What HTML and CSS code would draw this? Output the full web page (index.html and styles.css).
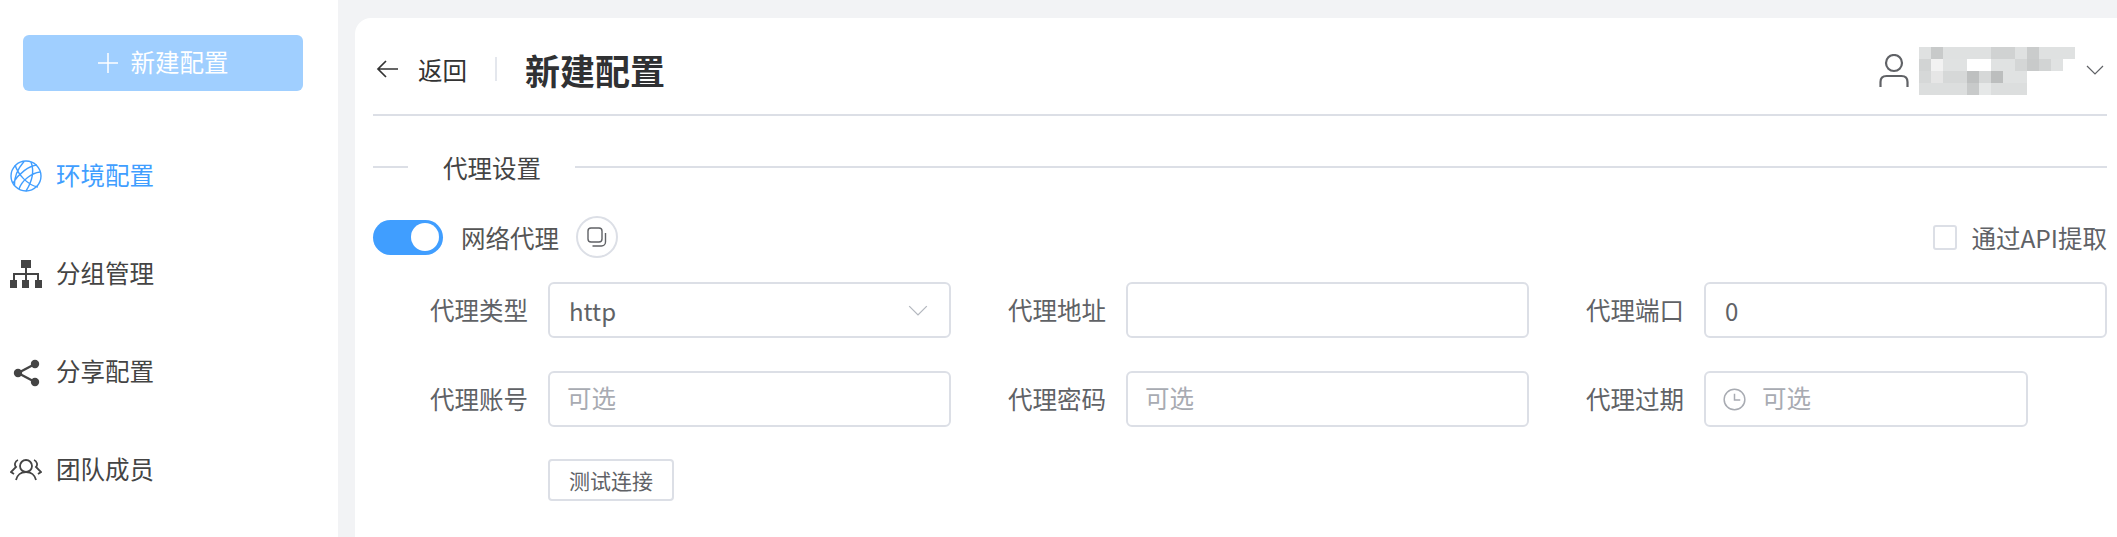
FILE: index.html
```html
<!DOCTYPE html>
<html lang="zh-CN">
  <head>
    <meta charset="UTF-8" />
    <meta name="viewport" content="width=device-width, initial-scale=1.0" />
    <title>新建配置</title>
    <link rel="stylesheet" href="styles.css">
  </head>
  <body>
    <aside class="sidebar">
      <button class="new-btn">
        <svg class="plus-icon" viewBox="0 0 20 20"><path d="M10 0v20M0 10h20" /></svg>
        <span>新建配置</span>
      </button>
      <nav class="nav">
        <a class="nav-item active">
          <svg class="nav-icon" viewBox="0 0 32 32" fill="none" stroke="currentColor" stroke-width="1.4">
            <circle cx="16" cy="16" r="15" />
            <path d="M5 5c3 9 12 20 23 22M14 1.5c-6 7-10 15-9.5 24M27 5C19 6 9 13 3 23M30 12c-8 1-18 8-21 17M21 2c3 8 2 18-5 29" />
          </svg>
          <span>环境配置</span>
        </a>
        <a class="nav-item">
          <svg class="nav-icon" viewBox="0 0 32 28" fill="currentColor">
            <rect x="11" y="0" width="10" height="8" />
            <rect x="15" y="8" width="2" height="6" />
            <rect x="3" y="13" width="26" height="2" />
            <rect x="3" y="15" width="2" height="5" />
            <rect x="15" y="15" width="2" height="5" />
            <rect x="27" y="15" width="2" height="5" />
            <rect x="0" y="20" width="7" height="8" />
            <rect x="12" y="20" width="7" height="8" />
            <rect x="25" y="20" width="7" height="8" />
          </svg>
          <span>分组管理</span>
        </a>
        <a class="nav-item">
          <svg class="nav-icon share-icon" viewBox="0 0 32 32" fill="currentColor">
            <circle cx="8" cy="16" r="4.2" />
            <circle cx="25" cy="7" r="4.2" />
            <circle cx="25" cy="25" r="4.2" />
            <path d="M8 16 25 7M8 16l17 9" stroke="currentColor" stroke-width="2.4" />
          </svg>
          <span>分享配置</span>
        </a>
        <a class="nav-item">
          <svg class="nav-icon" viewBox="0 0 32 24" fill="none" stroke="currentColor" stroke-width="1.8">
            <circle cx="16" cy="8" r="6" />
            <path d="M6 22c1-5 5-8 10-8s9 3 10 8M8 2C5 3 4 7 6 9l-5 5 3 2M24 2c3 1 4 5 2 7l5 5-3 2" />
          </svg>
          <span>团队成员</span>
        </a>
      </nav>
    </aside>

    <main class="main">
      <div class="panel">
        <header class="page-header">
          <a class="back">
            <svg class="back-icon" viewBox="0 0 22 18" fill="none" stroke="currentColor" stroke-width="1.7"><path d="M10 1 2 9l8 8M2 9h20" /></svg>
            返回
          </a>
          <span class="header-sep"></span>
          <h1 class="page-title">新建配置</h1>
          <div class="user">
            <svg class="user-icon" viewBox="0 0 30 34" fill="none" stroke="currentColor" stroke-width="2.2">
              <circle cx="15" cy="9" r="8" />
              <path d="M1.5 33v-5c0-4 2-6 6-6h15c4 0 6 2 6 6v5" />
            </svg>
            <svg class="user-blur" viewBox="0 0 13 4" shape-rendering="crispEdges">
              <rect width="13" height="1" fill="#dfe1e1" />
              <rect x="1" width="1" height="1" fill="#c8caca" />
              <rect x="6" width="2" height="1" fill="#d0d2d2" />
              <rect x="9" width="1" height="1" fill="#cacccc" />
              <rect y="1" width="13" height="1" fill="#e0e2e2" />
              <rect y="1" width="1" height="1" fill="#d2d4d4" />
              <rect x="1" y="1" width="1" height="1" fill="#f2f2f2" />
              <rect x="4" y="1" width="2" height="1" fill="#ffffff" />
              <rect x="8" y="1" width="1" height="1" fill="#d4d6d6" />
              <rect x="9" y="1" width="1" height="1" fill="#c8caca" />
              <rect x="10" y="1" width="1" height="1" fill="#d2d4d4" />
              <rect x="12" y="1" width="1" height="1" fill="#ffffff" />
              <rect y="2" width="9" height="1" fill="#d6d8d8" />
              <rect x="1" y="2" width="1" height="1" fill="#e6e6e6" />
              <rect x="4" y="2" width="1" height="1" fill="#bec0c0" />
              <rect x="6" y="2" width="1" height="1" fill="#bcbebe" />
              <rect x="7" y="2" width="2" height="1" fill="#e0e2e2" />
              <rect y="3" width="9" height="1" fill="#dcdede" />
              <rect x="4" y="3" width="1" height="1" fill="#c8caca" />
              <rect x="5" y="3" width="1" height="1" fill="#e6e8e8" />
            </svg>
            <svg class="chevron user-chevron" viewBox="0 0 18 10"><path d="M1 1l8 8 8-8" /></svg>
          </div>
        </header>

        <div class="section-title"><span>代理设置</span></div>

        <div class="switch-row">
          <span class="switch"><i class="switch-knob"></i></span>
          <span class="switch-label">网络代理</span>
          <span class="copy-btn">
            <svg class="copy-icon" viewBox="0 0 20 20" fill="none" stroke="currentColor" stroke-width="1.4">
              <rect x="1" y="1" width="14" height="14" rx="3" />
              <path d="M18.5 6v9a4 4 0 0 1-4 4h-9" />
            </svg>
          </span>
          <label class="api-check"><span class="checkbox"></span>通过API提取</label>
        </div>

        <div class="form-grid">
          <div class="form-item">
            <label>代理类型</label>
            <div class="input select">
              <span>http</span>
              <svg class="chevron select-chevron" viewBox="0 0 18 10"><path d="M1 1l8 8 8-8" /></svg>
            </div>
          </div>
          <div class="form-item">
            <label>代理地址</label>
            <div class="input"></div>
          </div>
          <div class="form-item">
            <label>代理端口</label>
            <div class="input"><span>0</span></div>
          </div>
          <div class="form-item">
            <label>代理账号</label>
            <div class="input placeholder"><span>可选</span></div>
          </div>
          <div class="form-item">
            <label>代理密码</label>
            <div class="input placeholder"><span>可选</span></div>
          </div>
          <div class="form-item">
            <label>代理过期</label>
            <div class="input placeholder date">
              <svg class="clock-icon" viewBox="0 0 20 20" fill="none" stroke="currentColor" stroke-width="1.3">
                <circle cx="10" cy="10" r="9" />
                <path d="M10 5v5.5h5" />
              </svg>
              <span>可选</span>
            </div>
          </div>
        </div>

        <div class="test-row"><button class="test-btn">测试连接</button></div>
      </div>
    </main>
  </body>
</html>
```

FILE: styles.css
```css
* {
  box-sizing: border-box;
}
html,
body {
  margin: 0;
  height: 537px;
  overflow: hidden;
}
body {
  display: flex;
  font-family: "Noto Sans CJK SC", "Noto Sans", sans-serif;
  font-size: 24.5px;
  color: #606266;
  background: #fff;
}
.sidebar {
  width: 338px;
  flex: none;
  padding: 35px 35px 0 23px;
}
.new-btn {
  display: flex;
  align-items: center;
  justify-content: center;
  gap: 13px;
  width: 280px;
  height: 56px;
  border: none;
  border-radius: 6px;
  background: #a0cfff;
  color: #fff;
  font: inherit;
}
.new-btn span {
  padding-bottom: 4px;
}
.plus-icon {
  width: 20px;
  height: 20px;
  fill: none;
  stroke: #fff;
  stroke-width: 1.5;
}
.nav {
  margin-top: 36px;
  margin-left: -13px;
}
.nav-item {
  display: flex;
  align-items: center;
  gap: 14px;
  height: 98px;
  color: #444;
}
.nav-item span {
  padding-bottom: 4px;
}
.nav-item.active {
  color: #409eff;
}
.nav-icon {
  width: 32px;
  height: 32px;
  flex: none;
}
.share-icon {
  margin-top: 2px;
}
.main {
  flex: 1;
  padding: 18px 0 0 17px;
  background: #f2f3f5;
}
.panel {
  height: 100%;
  padding: 0 10px 0 18px;
  border-radius: 16px 0 0 0;
  background: #fff;
}
.page-header {
  display: flex;
  align-items: center;
  height: 98px;
  padding: 6px 0 0 3px;
  border-bottom: 2px solid #dcdfe6;
}
.back {
  display: flex;
  align-items: center;
  gap: 20px;
  color: #333;
}
.back-icon {
  width: 22px;
  height: 18px;
}
.header-sep {
  width: 2px;
  height: 24px;
  margin: 0 28px 0 28px;
  background: #e4e7ed;
}
.page-title {
  margin: 0;
  font-size: 35px;
  font-weight: 700;
  color: #303133;
}
.user {
  display: flex;
  align-items: center;
  margin-left: auto;
  color: #606266;
}
.user-icon {
  width: 30px;
  height: 34px;
  margin-top: 3px;
}
.user-blur {
  width: 156px;
  height: 48px;
  margin: 4px 11px 0 10px;
}
.chevron {
  fill: none;
  stroke: currentColor;
  stroke-width: 1.2;
}
.user-chevron {
  width: 18px;
  height: 10px;
  margin: 2px 3px 0 0;
}
.section-title {
  display: flex;
  align-items: center;
  height: 102px;
  color: #444;
}
.section-title::before {
  content: "";
  width: 35px;
  height: 2px;
  background: #dcdfe6;
}
.section-title::after {
  content: "";
  flex: 1;
  height: 2px;
  background: #dcdfe6;
}
.section-title span {
  padding: 0 34px 0 35px;
}
.switch-row {
  display: flex;
  align-items: center;
  height: 42px;
  margin-top: -2px;
}
.switch {
  display: flex;
  align-items: center;
  justify-content: flex-end;
  width: 70px;
  height: 35px;
  padding-right: 4px;
  border-radius: 18px;
  background: #409eff;
}
.switch-knob {
  width: 28px;
  height: 28px;
  border-radius: 50%;
  background: #fff;
}
.switch-label {
  margin-left: 18px;
  color: #555;
}
.copy-btn {
  display: flex;
  align-items: center;
  justify-content: center;
  width: 42px;
  height: 42px;
  margin-left: 17px;
  border: 2px solid #dcdfe6;
  border-radius: 50%;
  color: #606266;
}
.copy-icon {
  width: 20px;
  height: 20px;
}
.api-check {
  display: flex;
  align-items: center;
  gap: 14px;
  margin-left: auto;
}
.checkbox {
  width: 24px;
  height: 25px;
  border: 2px solid #dcdfe6;
  border-radius: 3px;
}
.form-grid {
  display: grid;
  grid-template-columns: repeat(3, 578px);
  row-gap: 33px;
  margin-top: 24px;
}
.form-item {
  display: flex;
  align-items: center;
  justify-content: flex-end;
  gap: 20px;
}
.form-item label {
  padding-bottom: 2px;
}
.input {
  display: flex;
  align-items: center;
  width: 403px;
  height: 56px;
  padding: 0 19px;
  border: 2px solid #dcdfe6;
  border-radius: 6px;
  font-size: 24px;
}
.select {
  justify-content: space-between;
}
.select-chevron {
  width: 20px;
  height: 11px;
  margin-right: 2px;
  color: #b4b8bf;
}
.placeholder {
  padding-left: 17px;
  padding-bottom: 3px;
  font-size: 24.5px;
  color: #a8abb2;
}
.date {
  width: 324px;
  margin-right: 79px;
  gap: 16px;
}
.clock-icon {
  width: 23px;
  height: 23px;
  margin-top: 3px;
}
.test-row {
  padding: 32px 0 0 175px;
}
.test-btn {
  width: 126px;
  height: 42px;
  padding: 0;
  border: 2px solid #dcdfe6;
  border-radius: 4px;
  background: #fff;
  color: #606266;
  font: inherit;
  font-size: 21px;
}
```
